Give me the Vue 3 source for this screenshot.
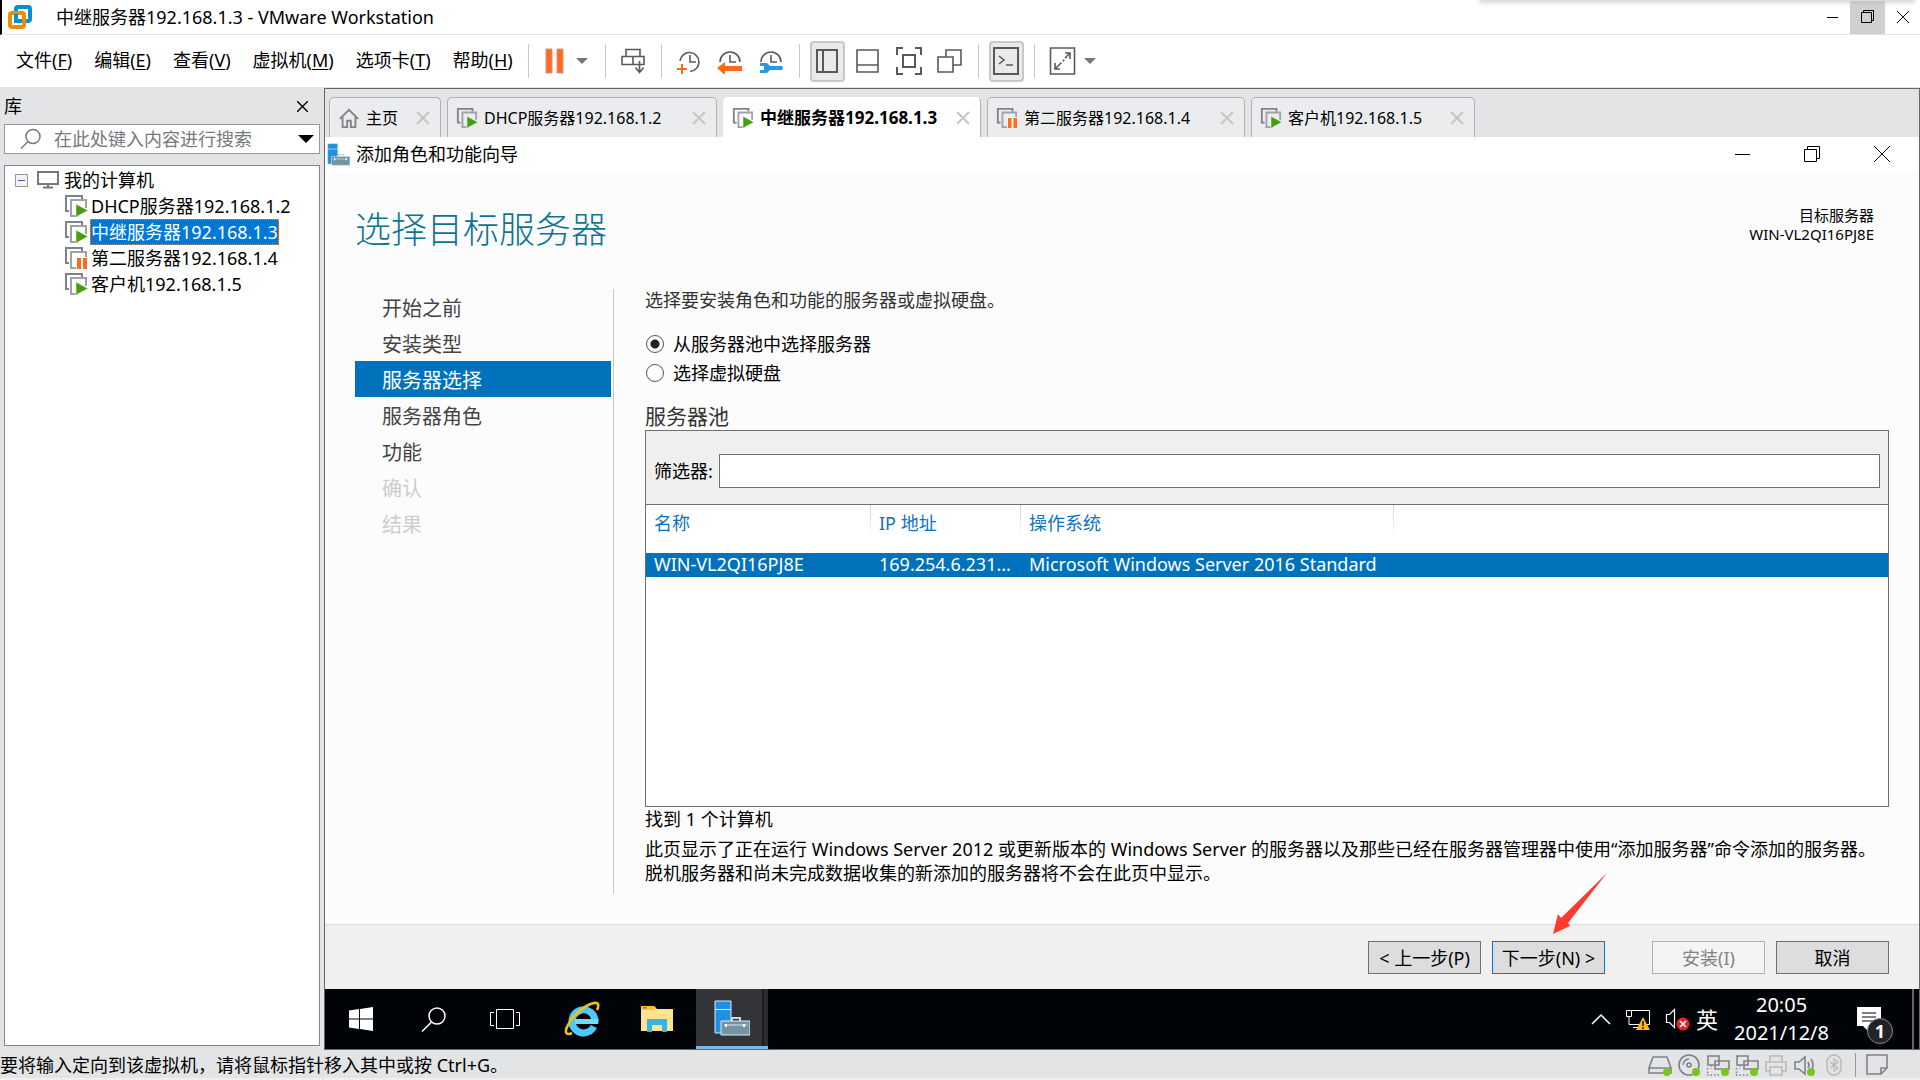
<template>
  <div class="workstation">
    <!-- 公用图标 -->
    <svg class="symbols" aria-hidden="true">
      <symbol id="vm-frame" viewBox="0 0 24 24">
        <path d="M5 17H2V2h16v3" fill="none" stroke="#808285" stroke-width="2" />
        <path d="M14 22H7V6h15v8" fill="none" stroke="#a0a2a5" stroke-width="2" />
      </symbol>
      <symbol id="vm-run" viewBox="0 0 24 24">
        <use href="#vm-frame" />
        <path d="M12 10v13l12-6.500z" fill="#4a9c10" stroke="#fff" stroke-width="0.500" />
      </symbol>
      <symbol id="vm-pause" viewBox="0 0 24 24">
        <use href="#vm-frame" />
        <path d="M12 11h12v12H12z" fill="#fff" />
        <path d="M13 12h4v11h-4zM19 12h4v11h-4z" fill="#ff6a1c" />
      </symbol>
      <symbol id="home" viewBox="0 0 24 24">
        <path d="M2 13L12 3l10 10M5 11v11h5v-7h4v7h5V11" fill="none" stroke="#808285" stroke-width="2" />
      </symbol>
      <symbol id="clock" viewBox="0 0 26 26">
        <path d="M3 14a10 10 0 1 1 20 0" fill="none" stroke="#58595b" stroke-width="1.600" />
        <path d="M13 7v7h6" fill="none" stroke="#58595b" stroke-width="1.600" />
      </symbol>
      <symbol id="server" viewBox="0 0 36 36">
        <path d="M1 1h16v32H1z" fill="#1f8fe0" stroke="#d8ecfa" />
        <path d="M1 9.500h16" stroke="#d8ecfa" />
        <path d="M18 21v-3h8v3" fill="none" stroke="#c9d6de" stroke-width="2" />
        <path d="M7 21h29v14H7z" fill="#7393a7" stroke="#dfe8ee" />
        <path d="M10 25h23" stroke="#dfe8ee" />
        <path d="M12 24v3M30 24v3" stroke="#fff" stroke-width="2" />
      </symbol>
      <symbol id="net" viewBox="0 0 24 24">
        <path d="M2 3h11v9H2zM9 8h14v8H9z" fill="#e3e4e6" stroke="#808285" stroke-width="1.600" />
        <path d="M5 12v4M1 22h14M1.500 15v7" fill="none" stroke="#808285" stroke-width="1.500" stroke-dasharray="1.500 2" />
      </symbol>
    </svg>

    <!-- 标题栏 -->
    <header class="titlebar">
      <svg class="logo" viewBox="0 0 24 24">
        <rect x="8" y="2" width="14" height="14" rx="2" fill="none" stroke="#0091d5" stroke-width="4" />
        <rect x="2" y="8" width="14" height="14" rx="2" fill="none" stroke="#f38b00" stroke-width="4" />
        <path d="M8 9v7h6" fill="none" stroke="#0091d5" stroke-width="4" />
      </svg>
      <h1>中继服务器192.168.1.3 - VMware Workstation</h1>
      <div class="window-buttons">
        <button aria-label="最小化"><svg width="12" height="12"><path d="M0 6.500h11" stroke="#000" /></svg></button>
        <button class="pressed" aria-label="还原">
          <svg width="14" height="14" fill="none" stroke="#000"><path d="M.5 2.500h10v10H.5zM2.500 2.500v-2h10v10h-2" /></svg>
        </button>
        <button aria-label="关闭"><svg width="12" height="12"><path d="M0 0l12 12M12 0L0 12" stroke="#000" /></svg></button>
      </div>
      <div class="top-shadow"></div>
    </header>

    <!-- 菜单和工具栏 -->
    <nav class="menubar">
      <button class="menu" v-for="menu in menus" :key="menu.key">{{ menu.name }}(<u>{{ menu.key }}</u>)</button>
      <i class="sep"></i>
      <button class="tool tool-pause" aria-label="挂起">
        <svg width="20" height="26"><path d="M1 1h6v24H1zM12 1h6v24h-6z" fill="#ff6a1c" stroke="#c79b83" /></svg>
        <svg width="12" height="8"><path d="M0 1h12L6 7z" fill="#77787b" /></svg>
      </button>
      <i class="sep"></i>
      <button class="tool" aria-label="发送 Ctrl+Alt+Del">
        <svg width="26" height="26" fill="none" stroke="#58595b" stroke-width="1.600">
          <path d="M6 1.500h14v7H6zM2 8.500h11v8H2zM13 8.500h11v8H13zM19.500 13v11M15.500 19.500l4 5 4-5" />
        </svg>
      </button>
      <i class="sep"></i>
      <button class="tool" aria-label="拍摄快照">
        <svg width="26" height="26" fill="none">
          <path d="M4 13a9.500 9.500 0 1 1 10 10.500M14 7v7h6" stroke="#58595b" stroke-width="1.600" />
          <path d="M6 16v10M1 21h10" stroke="#ff6a1c" stroke-width="2" />
        </svg>
      </button>
      <button class="tool" aria-label="恢复快照">
        <svg width="26" height="26">
          <use href="#clock" />
          <path d="M0 20l8-6v4h17v5H8v4z" fill="#ff6a1c" />
        </svg>
      </button>
      <button class="tool" aria-label="管理快照">
        <svg width="26" height="26">
          <use href="#clock" />
          <path d="M2 15h7l3 3h9q4-1 4 2t-4 2h-9l-3 3H2v-3h4v-4H2z" fill="#2a9ae0" />
        </svg>
      </button>
      <i class="sep"></i>
      <button class="tool checked" aria-label="显示库">
        <svg width="26" height="26" fill="none" stroke="#58595b" stroke-width="2"><path d="M3 2h20v22H3zM9 2v22" /></svg>
      </button>
      <button class="tool" aria-label="缩略图栏">
        <svg width="26" height="26" fill="none" stroke="#58595b" stroke-width="1.600"><path d="M2 2h21v22H2zM2 17h21" /></svg>
      </button>
      <button class="tool" aria-label="全屏">
        <svg width="28" height="28" fill="none" stroke="#58595b" stroke-width="2">
          <path d="M8 8h12v12H8zM2 8V1h6M20 1h6v7M26 20v7h-6M8 27H2v-7" />
        </svg>
      </button>
      <button class="tool" aria-label="Unity">
        <svg width="26" height="26" fill="none" stroke="#58595b" stroke-width="1.600"><path d="M1 9h15v15H1zM9 9V2h15v15h-8" /></svg>
      </button>
      <i class="sep"></i>
      <button class="tool checked" aria-label="控制台视图">
        <svg width="28" height="28" fill="none" stroke="#58595b" stroke-width="2"><path d="M2 1h24v26H2z" /><path d="M7 9l5 4-5 4M14 18h7" stroke-width="1.600" /></svg>
      </button>
      <i class="sep"></i>
      <button class="tool tool-stretch" aria-label="自由拉伸">
        <svg width="27" height="28" fill="none" stroke="#58595b" stroke-width="1.600">
          <path d="M1.500 1h24v26h-24z" />
          <path d="M16 6h5v6M6 16v6h5M21 6l-5 5M6 22l5-5" />
          <path d="M11 17l6-6" stroke-dasharray="2 2" />
        </svg>
        <svg width="12" height="8"><path d="M0 1h12L6 7z" fill="#77787b" /></svg>
      </button>
    </nav>

    <div class="body">
      <!-- 库 -->
      <aside class="library">
        <div class="library-title">
          <h2>库</h2>
          <button aria-label="关闭库"><svg width="11" height="11"><path d="M0 0l11 11M11 0L0 11" stroke="#000" stroke-width="1.400" /></svg></button>
        </div>
        <div class="search">
          <svg width="22" height="22" fill="none" stroke="#77787b" stroke-width="1.500"><circle cx="13" cy="8.500" r="7" /><path d="M8 13.500L1 20.500" /></svg>
          <input type="text" aria-label="搜索" placeholder="在此处键入内容进行搜索" v-model="keyword" />
          <button aria-label="搜索选项"><svg width="16" height="8"><path d="M0 0h16L8 8z" fill="#000" /></svg></button>
        </div>
        <div class="tree">
          <div class="tree-root">
            <svg width="13" height="13"><path d="M.5.5h12v12H.5z" fill="#f2f2f2" stroke="#989898" /><path d="M3 6.500h7" stroke="#3f5fa8" /></svg>
            <svg width="22" height="18"><path d="M1 1h20v12H1zM11 13v3M6 16.500h10" fill="none" stroke="#77787b" stroke-width="2" /></svg>
            <span>我的计算机</span>
          </div>
          <ul>
            <li v-for="vm in machines" :key="vm.name">
              <button :class="{ selected: vm.name === current }" @click="current = vm.name">
                <svg width="24" height="24"><use :href="'#' + vm.icon" /></svg>
                <span>{{ vm.name }}</span>
              </button>
            </li>
          </ul>
        </div>
      </aside>

      <section class="console">
        <!-- 标签列表 -->
        <div class="tabs">
          <div class="tab" v-for="tab in tabs" :key="tab.name" :class="{ active: tab.name === current }" :style="{ width: tab.width + 'px' }">
            <button class="tab-title" @click="current = tab.name">
              <svg width="22" height="24"><use :href="'#' + tab.icon" /></svg>
              <span>{{ tab.name }}</span>
            </button>
            <button class="tab-close" aria-label="关闭标签">
              <svg width="14" height="14"><path d="M1 1l12 12M13 1L1 13" stroke="#c4c5c7" stroke-width="2" /></svg>
            </button>
          </div>
        </div>

        <!-- 添加角色和功能向导 -->
        <div class="wizard">
          <div class="wizard-bar">
            <svg width="23" height="23"><use href="#server" /></svg>
            <span>添加角色和功能向导</span>
            <div class="wizard-buttons">
              <button aria-label="最小化"><svg width="15" height="15"><path d="M0 7.500h15" stroke="#000" /></svg></button>
              <button aria-label="还原">
                <svg width="16" height="16" fill="none" stroke="#000"><path d="M.5 3.500h12v12H.5zM3.500 3.500v-3h12v12h-3" /></svg>
              </button>
              <button aria-label="关闭"><svg width="16" height="16"><path d="M0 0l16 16M16 0L0 16" stroke="#000" /></svg></button>
            </div>
          </div>

          <div class="wizard-head">
            <h2>选择目标服务器</h2>
            <p>目标服务器<br />WIN-VL2QI16PJ8E</p>
          </div>

          <div class="wizard-main">
            <ol class="steps">
              <li v-for="step in steps" :key="step.name" :class="step.state">{{ step.name }}</li>
            </ol>
            <div class="page">
              <p class="intro">选择要安装角色和功能的服务器或虚拟硬盘。</p>
              <label class="radio"><input type="radio" name="target" value="pool" v-model="target" />从服务器池中选择服务器</label>
              <label class="radio"><input type="radio" name="target" value="vhd" v-model="target" />选择虚拟硬盘</label>
              <h3>服务器池</h3>
              <div class="pool">
                <div class="filter">
                  <label for="filter">筛选器:</label>
                  <input id="filter" type="text" v-model="filter" />
                </div>
                <table>
                  <thead>
                    <tr><th class="col-name">名称</th><th class="col-ip">IP 地址</th><th class="col-os">操作系统</th><td></td></tr>
                  </thead>
                  <tbody>
                    <tr><td>WIN-VL2QI16PJ8E</td><td>169.254.6.231...</td><td>Microsoft Windows Server 2016 Standard</td><td></td></tr>
                  </tbody>
                </table>
              </div>
              <p class="found">找到 1 个计算机</p>
              <p class="note">此页显示了正在运行 Windows Server 2012 或更新版本的 Windows Server 的服务器以及那些已经在服务器管理器中使用“添加服务器”命令添加的服务器。脱机服务器和尚未完成数据收集的新添加的服务器将不会在此页中显示。</p>
            </div>
          </div>

          <div class="wizard-foot">
            <button>&lt; 上一步(P)</button>
            <div class="next">
              <button class="default">下一步(N) &gt;</button>
              <svg width="60" height="64"><path d="M57 1L3 62l5-20 3 4zM57 1L18 51l2 3L3 62l8-16z" fill="#ff3b30" /></svg>
            </div>
            <button class="install" disabled>安装(I)</button>
            <button>取消</button>
          </div>
        </div>

        <!-- 任务栏 -->
        <div class="taskbar">
          <button aria-label="开始">
            <svg width="24" height="24" fill="#fff"><path d="M0 3.500l10-1.400v9.400H0zM11 2l13-2v11.500H11zM0 12.500h10V22L0 20.500zM11 12.500h13V24l-13-1.900z" /></svg>
          </button>
          <button aria-label="搜索">
            <svg width="25" height="25" fill="none" stroke="#fff" stroke-width="1.500"><circle cx="16" cy="9" r="8" /><path d="M10.500 15L1 24.500" /></svg>
          </button>
          <button aria-label="任务视图">
            <svg width="30" height="20" fill="none" stroke="#fff"><path d="M6.500.5h17v19h-17zM4 3.500H.5v13H4M26 3.500h3.500v13H26" /></svg>
          </button>
          <button class="app first" aria-label="Internet Explorer">
            <svg width="36" height="36" viewBox="0 0 36 36" fill="none">
              <path d="M31 20.500A11.500 11.500 0 1 0 29.800 25.500" stroke="#4fc9f7" stroke-width="7" />
              <path d="M11 20.500h23.400" stroke="#6fdcff" stroke-width="5" />
              <path d="M8 32c-6 3-8-1-4-8C9 14 21 4 30 2c5-1 5 3 3 7" stroke="#f4c20d" stroke-width="2.600" />
            </svg>
          </button>
          <button class="app" aria-label="文件资源管理器">
            <svg width="32" height="28">
              <path d="M0 1h13l3 3h16v22H0z" fill="#ffe48f" />
              <path d="M0 1h13l2 2-2 2H0z" fill="#f7c52d" />
              <path d="M2 2h4v1.500H2z" fill="#2a9fd8" />
              <path d="M6 14h20v13h-5v-7H11v7H6z" fill="#38b3e6" />
            </svg>
          </button>
          <button class="app running" aria-label="服务器管理器">
            <svg width="36" height="36"><use href="#server" /></svg>
          </button>
          <div class="tray">
            <svg width="20" height="12"><path d="M1 11l9-9 9 9" fill="none" stroke="#fff" stroke-width="1.500" /></svg>
            <svg width="26" height="24">
              <path d="M7 3.500h17.500v14H4M1.500 3.500h5v6h-5zM4 9v8.500M8 20.500h8" fill="none" stroke="#fff" />
              <path d="M18 10l7 13H11z" fill="#fdb813" /><path d="M18 14v5M18 20v2" stroke="#222" stroke-width="1.600" />
            </svg>
            <svg width="25" height="24">
              <path d="M1.500 7.500h3l5-5v18l-5-5h-3z" fill="none" stroke="#fff" stroke-width="1.200" />
              <circle cx="18" cy="17" r="6.500" fill="#e0252d" /><path d="M15 14l6 6M21 14l-6 6" stroke="#fff" stroke-width="1.500" />
            </svg>
            <span class="lang">英</span>
            <time>20:05<br />2021/12/8</time>
            <div class="notice">
              <svg width="24" height="24"><path d="M0 0h24v19h-8l-5 5-5-5H0z" fill="#fff" /><path d="M5 6h14M5 10h14M5 14h14" stroke="#000308" /></svg>
              <b>1</b>
            </div>
          </div>
        </div>
      </section>
    </div>

    <!-- 状态栏 -->
    <footer class="statusbar">
      <p>要将输入定向到该虚拟机，请将鼠标指针移入其中或按 Ctrl+G。</p>
      <div class="devices">
        <svg width="24" height="24"><path d="M5 4h14l4 11v5H1v-5zM1 15h22" fill="none" stroke="#808285" stroke-width="1.600" /><circle cx="19" cy="19" r="4" fill="#7ac51c" /></svg>
        <svg width="24" height="24"><g fill="none" stroke="#808285" stroke-width="1.600"><circle cx="12" cy="12" r="10" /><circle cx="12" cy="12" r="2" /><path d="M6 12a6 6 0 0 1 6-6" /></g><circle cx="19" cy="19" r="4" fill="#7ac51c" /></svg>
        <svg width="24" height="24"><use href="#net" /><circle cx="19" cy="19" r="4" fill="#7ac51c" /></svg>
        <svg width="24" height="24"><use href="#net" /><circle cx="19" cy="19" r="4" fill="#7ac51c" /></svg>
        <svg width="24" height="24"><path d="M6 9V3h12v6M6 18H2V9h20v9h-4M6 14h12v8H6z" fill="none" stroke="#b8b9bb" stroke-width="1.600" /></svg>
        <svg width="24" height="24"><path d="M2 9h4l6-5v17l-6-5H2zM15 9q2 3 0 6M18 6q4 6 0 12" fill="none" stroke="#808285" stroke-width="1.600" /><circle cx="18" cy="19" r="4" fill="#7ac51c" /></svg>
        <svg width="24" height="24"><rect x="5" y="2" width="14" height="20" rx="7" fill="none" stroke="#b8b9bb" stroke-width="1.500" /><path d="M8 9l8 6-4 3V6l4 3-8 6" fill="none" stroke="#b8b9bb" stroke-width="1.300" /></svg>
      </div>
      <svg class="memo" width="24" height="24"><path d="M2 2h20v13l-6 6H2zM22 15h-6v6" fill="none" stroke="#808285" stroke-width="1.600" /></svg>
    </footer>
  </div>
</template>

<script setup>
import { ref } from 'vue'

// 菜单
const menus = [
  { name: '文件', key: 'F' },
  { name: '编辑', key: 'E' },
  { name: '查看', key: 'V' },
  { name: '虚拟机', key: 'M' },
  { name: '选项卡', key: 'T' },
  { name: '帮助', key: 'H' }
]
// 当前虚拟机
const current = ref('中继服务器192.168.1.3')
const machines = [
  { name: 'DHCP服务器192.168.1.2', icon: 'vm-run' },
  { name: '中继服务器192.168.1.3', icon: 'vm-run' },
  { name: '第二服务器192.168.1.4', icon: 'vm-pause' },
  { name: '客户机192.168.1.5', icon: 'vm-run' }
]
// 标签宽度按加粗后的文字预留
const tabWidths = [270, 258, 258, 224]
const tabs = [
  { name: '主页', icon: 'home', width: 112 },
  ...machines.map((vm, index) => ({ ...vm, width: tabWidths[index] }))
]
// 向导步骤
const steps = [
  { name: '开始之前', state: '' },
  { name: '安装类型', state: '' },
  { name: '服务器选择', state: 'active' },
  { name: '服务器角色', state: '' },
  { name: '功能', state: '' },
  { name: '确认', state: 'disabled' },
  { name: '结果', state: 'disabled' }
]
const keyword = ref('')
const filter = ref('')
const target = ref('pool')
</script>

<style>
body {
  background: #e3e4e6;
}
</style>

<style scoped>
.workstation {
  min-height: 100vh;
  display: flex;
  flex-direction: column;
  background: #e3e4e6;
  color: #000;
  font-family: "Noto Sans", "Noto Sans CJK SC", sans-serif;
  font-size: 18px;
  line-height: 24px;
}
.workstation * {
  box-sizing: border-box;
}
h1,
h2,
h3,
p,
ul,
ol {
  margin: 0;
  padding: 0;
  font-size: 18px;
  font-weight: normal;
  list-style: none;
}
button,
input {
  margin: 0;
  padding: 0;
  border: 0;
  background: none;
  color: inherit;
  font: inherit;
}
svg {
  display: block;
  flex: none;
}
.symbols {
  position: absolute;
  width: 0;
  height: 0;
}

/* 标题栏 */
.titlebar {
  position: relative;
  height: 35px;
  display: flex;
  align-items: center;
  background: #fff;
  border-bottom: 1px solid #e3e4e6;
  border-left: 2px solid #000;
}
.logo {
  width: 24px;
  height: 24px;
  margin: 0 24px 0 6px;
}
.window-buttons {
  display: flex;
  align-self: stretch;
  margin-left: auto;
}
.window-buttons button {
  width: 35px;
  display: flex;
  align-items: center;
  justify-content: center;
}
.window-buttons .pressed {
  background: #d0d0d0;
}
.top-shadow {
  position: absolute;
  top: 0;
  right: 6px;
  width: 434px;
  height: 1px;
  background: #ddd;
  box-shadow: 0 0 5px 1px #bbb;
}

/* 菜单栏 */
.menubar {
  height: 52px;
  padding: 0 5px;
  display: flex;
  align-items: center;
  background: #fff;
}
.menu {
  padding: 0 11px 2px;
  white-space: nowrap;
}
.menu u {
  text-underline-offset: 2px;
  text-decoration-thickness: 1px;
}
.sep {
  width: 1px;
  height: 34px;
  margin: 0 10px;
  background: #c8c8c8;
}
.menu + .sep {
  margin-left: 4px;
}
.tool {
  width: 35px;
  height: 41px;
  display: flex;
  align-items: center;
  justify-content: center;
  border-radius: 4px;
}
.tool + .tool {
  margin-left: 6px;
}
.tool.checked {
  background: #e9eaec;
  border: 2px solid #c8c8c8;
}
.tool-pause {
  width: 56px;
  gap: 11px;
}
.tool-stretch {
  width: 56px;
  gap: 8px;
}

.body {
  flex: 1;
  display: flex;
  padding-top: 1px;
}

/* 库 */
.library {
  width: 324px;
  flex: none;
  padding: 0 4px 4px;
  display: flex;
  flex-direction: column;
}
.library-title {
  height: 36px;
  display: flex;
  align-items: center;
  justify-content: space-between;
}
.library-title button {
  padding: 4px 12px;
}
.search {
  height: 30px;
  display: flex;
  align-items: center;
  background: #fff;
  border: 1px solid #999;
  padding: 0 5px 0 15px;
}
.search input {
  flex: 1;
  min-width: 0;
  height: 24px;
  padding-left: 12px;
  outline: none;
}
.search input::placeholder {
  color: #77787b;
  opacity: 1;
}
.tree {
  flex: 1;
  background: #fff;
  border: 1px solid #828790;
  margin-top: 11px;
  padding: 1px 0;
}
.tree-root {
  height: 26px;
  display: flex;
  align-items: center;
  padding-left: 10px;
  gap: 9px;
}
.tree-root span {
  margin-left: -4px;
}
.tree li button {
  height: 26px;
  display: flex;
  align-items: center;
  padding-left: 59px;
  gap: 2px;
}
.tree li span {
  border: 1px solid transparent;
}
.tree li .selected span {
  background: #0078d7;
  border: 1px dotted #ff8728;
  color: #fff;
}

/* 右侧控制台 */
.console {
  flex: 1;
  min-width: 0;
  display: flex;
  flex-direction: column;
  border: 1px solid #666;
}
.tabs {
  height: 48px;
  display: flex;
  align-items: flex-end;
  gap: 6px;
  padding-left: 4px;
}
.tab {
  height: 40px;
  display: flex;
  align-items: center;
  background: #ebecee;
  border: 1px solid #aeb0b3;
  border-bottom: 0;
  border-radius: 5px 5px 0 0;
  padding: 0 10px 0 8px;
  font-size: 16px;
}
.tab.active {
  background: #fff;
  border-top-color: #fff;
  border-left-color: #fff;
  font-size: 17px;
  font-weight: bold;
}
.tab-title {
  flex: 1;
  display: flex;
  align-items: center;
  gap: 6px;
  white-space: nowrap;
}

/* 向导窗口 */
.wizard {
  flex: 1;
  display: flex;
  flex-direction: column;
  background: #fcfcfc;
}
.wizard-bar {
  height: 34px;
  display: flex;
  align-items: center;
  gap: 6px;
  padding: 0 2px;
  background: #fff;
}
.wizard-buttons {
  display: flex;
  align-self: stretch;
  margin-left: auto;
}
.wizard-buttons button {
  width: 70px;
  display: flex;
  align-items: center;
  justify-content: center;
}
.wizard-head {
  height: 118px;
  display: flex;
  justify-content: space-between;
  padding: 35px 45px 0 30px;
}
.wizard-head h2 {
  font-size: 36px;
  font-weight: 300;
  line-height: 48px;
  color: #0e7394;
}
.wizard-head p {
  font-size: 15px;
  line-height: 19px;
  text-align: right;
}
.wizard-main {
  flex: 1;
  display: flex;
  padding: 0 30px 30px;
}
.steps {
  width: 259px;
  flex: none;
  padding-right: 2px;
  border-right: 1px solid #c8c8c8;
}
.steps li {
  height: 36px;
  padding: 4px 0 0 27px;
  font-size: 20px;
  line-height: 32px;
  color: #444;
}
.steps li.active {
  background: #0072bc;
  color: #fff;
}
.steps li.disabled {
  color: #ccc;
}
.page {
  flex: 1;
  min-width: 0;
  padding: 0 0 9px 31px;
  display: flex;
  flex-direction: column;
}
.intro {
  line-height: 22px;
  color: #333;
  margin-bottom: 18px;
}
.radio {
  height: 29px;
  display: flex;
  align-items: center;
  gap: 9px;
}
.radio input {
  appearance: none;
  width: 18px;
  height: 18px;
  margin-left: 1px;
  border: 1px solid #555;
  border-radius: 50%;
  background: #fff;
}
.radio input:checked {
  background: radial-gradient(#222 4px, #fff 5px);
}
h3 {
  margin-top: 15px;
  font-size: 21px;
  line-height: 28px;
  color: #333;
}
.pool {
  flex: 1;
  background: #fff;
  border: 1px solid #707070;
}
.filter {
  height: 74px;
  display: flex;
  align-items: center;
  gap: 6px;
  padding: 7px 8px 1px;
  background: #efefef;
  border-bottom: 1px solid #707070;
}
.filter input {
  flex: 1;
  height: 34px;
  padding: 0 6px;
  background: #fff;
  border: 1px solid #707070;
}
table {
  width: 100%;
  table-layout: fixed;
  border-collapse: collapse;
}
th {
  height: 48px;
  padding: 6px 8px;
  vertical-align: top;
  text-align: left;
  font-weight: normal;
  color: #0f72bd;
  background: linear-gradient(#ccc, #fff) right top / 1px 30px no-repeat;
}
.col-name {
  width: 225px;
}
.col-ip {
  width: 150px;
}
.col-os {
  width: 373px;
}
tbody td {
  height: 24px;
  padding: 0 0 0 8px;
  background: #0072bc;
  color: #fff;
  line-height: 22px;
  vertical-align: top;
  white-space: nowrap;
}
.found {
  margin: 0 0 6px;
}
.note {
  padding-right: 8px;
}
.wizard-foot {
  height: 65px;
  display: flex;
  justify-content: flex-end;
  gap: 11px;
  padding: 16px 30px 0;
  background: #f0f0f0;
  border-top: 1px solid #dcdcdc;
}
.wizard-foot button {
  width: 113px;
  height: 33px;
  background: #ddd;
  border: 1px solid #707070;
  white-space: nowrap;
}
.wizard-foot .default {
  border-color: #0078d7;
}
.wizard-foot .install {
  margin-left: 36px;
  background: #f4f4f4;
  border-color: #adb2b5;
  color: #838383;
}
.next {
  position: relative;
}
.next svg {
  position: absolute;
  left: 58px;
  top: -69px;
}

/* 任务栏 */
.taskbar {
  height: 60px;
  display: flex;
  background: #000308;
  color: #fff;
}
.taskbar button {
  width: 72px;
  display: flex;
  align-items: center;
  justify-content: center;
}
.taskbar .app {
  margin-right: 3px;
}
.taskbar .first {
  margin-left: 5px;
}
.taskbar .running {
  background: linear-gradient(90deg, #333438 66px, #1b1c20 66px, #1b1c20 68px, #2a2b2f 68px);
  border-bottom: 3px solid #76b9ed;
}
.tray {
  flex: 1;
  display: flex;
  align-items: center;
  justify-content: flex-end;
  gap: 14px;
  padding-right: 31px;
  margin-right: 5px;
  border-right: 2px solid #666;
}
.lang {
  font-size: 22px;
  margin: 0 2px 0 -8px;
}
time {
  font-size: 20px;
  line-height: 28px;
  text-align: center;
}
.notice {
  position: relative;
  margin-left: 14px;
}
.notice b {
  position: absolute;
  left: 10px;
  top: 11px;
  width: 26px;
  height: 26px;
  border: 1px solid #888;
  border-radius: 50%;
  background: #222327;
  line-height: 24px;
  text-align: center;
}

/* 状态栏 */
.statusbar {
  height: 30px;
  display: flex;
  align-items: center;
  border-bottom: 2px solid #f0f0f0;
  padding: 2px 31px 0 0;
}
.devices {
  display: flex;
  gap: 5px;
  margin-left: auto;
  padding-right: 9px;
  border-right: 1px solid #999;
}
.memo {
  margin-left: 9px;
}
</style>
